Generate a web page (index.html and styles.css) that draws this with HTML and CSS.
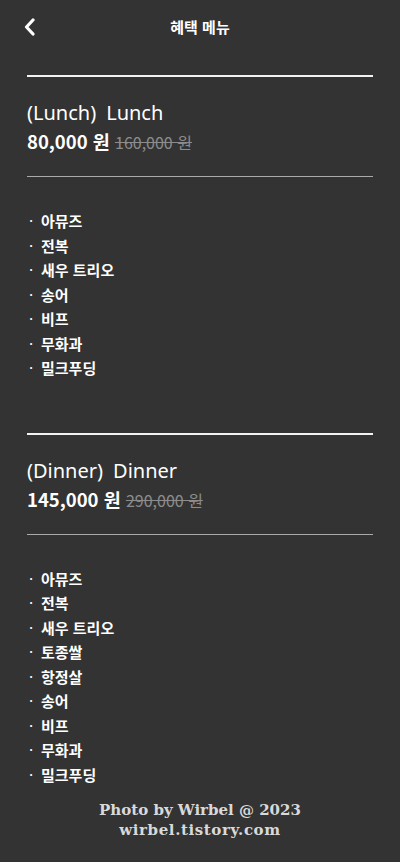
FILE: index.html
```html
<!doctype html>
<html lang="ko">
<head>
  <meta charset="utf-8">
  <meta name="viewport" content="width=device-width, initial-scale=1">
  <title>혜택 메뉴</title>
  <link rel="stylesheet" href="styles.css">
</head>
<body>
  <header class="topbar">
    <a class="back" href="#">
      <svg width="14" height="18" viewBox="0 0 14 18"><path d="M10 2 L3.5 9 L10 16" fill="none" stroke="#fff" stroke-width="3.2" stroke-linecap="round" stroke-linejoin="round"/></svg>
    </a>
    <h1 class="title">혜택 메뉴</h1>
  </header>

  <main class="content">
    <section class="course">
      <h2 class="course-name"><span>(Lunch)</span><span>Lunch</span></h2>
      <p class="price">80,000 원 <del class="old">160,000 원</del></p>
      <ul class="dishes">
        <li>아뮤즈</li>
        <li>전복</li>
        <li>새우 트리오</li>
        <li>송어</li>
        <li>비프</li>
        <li>무화과</li>
        <li>밀크푸딩</li>
      </ul>
    </section>

    <section class="course">
      <h2 class="course-name"><span>(Dinner)</span><span>Dinner</span></h2>
      <p class="price">145,000 원 <del class="old">290,000 원</del></p>
      <ul class="dishes">
        <li>아뮤즈</li>
        <li>전복</li>
        <li>새우 트리오</li>
        <li>토종쌀</li>
        <li>항정살</li>
        <li>송어</li>
        <li>비프</li>
        <li>무화과</li>
        <li>밀크푸딩</li>
      </ul>
    </section>
  </main>

  <footer class="credit">
    <p>Photo by Wirbel @ 2023</p>
    <p class="site">wirbel.tistory.com</p>
  </footer>
</body>
</html>
```

FILE: styles.css
```css
html{
  height: 100%;
}

body{
  margin: 0;
  min-height: 100%;
  background-color: #333333;
  color: #ffffff;
  font-family: "Noto Sans CJK KR", "Noto Sans", sans-serif;
}

.topbar{
  height: 52px;
  display: flex;
  align-items: center;
  justify-content: center;
  position: relative;
}

.back{
  position: absolute;
  left: 23px;
  top: 18px;
  display: block;
  line-height: 0;
}

.title{
  margin: 0;
  font-size: 15px;
  font-weight: 700;
}

.content{
  padding: 23px 27px 0;
}

.course{
  border-top: 2px solid #f2f2f2;
  padding-top: 21px;
  margin-bottom: 52px;
}

.course:last-child{
  margin-bottom: 0;
}

.course-name{
  margin: 0;
  font-family: "Noto Sans", "Noto Sans CJK KR", sans-serif;
  font-size: 20px;
  font-weight: 400;
  line-height: 30px;
  display: flex;
  gap: 10px;
}

.price{
  margin: 0;
  font-size: 18.5px;
  font-weight: 700;
  line-height: 27px;
  padding-bottom: 20px;
  border-bottom: 1px solid #aaaaaa;
}

.old{
  font-size: 16px;
  font-weight: 400;
  color: #8c8c8c;
}

.dishes{
  list-style: none;
  margin: 0;
  padding: 32px 0 0;
}

.dishes li{
  font-size: 15px;
  font-weight: 700;
  height: 24.5px;
  line-height: 24px;
}

.dishes li::before{
  content: "·";
  display: inline-block;
  width: 12px;
  padding-left: 2px;
  font-weight: 400;
}

.credit{
  padding: 13px 0 20px;
  text-align: center;
  font-family: "DejaVu Serif", serif;
  font-weight: 700;
  font-size: 15px;
  color: #d9d9d9;
}

.credit p{
  margin: 0;
  line-height: 20px;
}

.credit .site{
  letter-spacing: 0.6px;
}
```
